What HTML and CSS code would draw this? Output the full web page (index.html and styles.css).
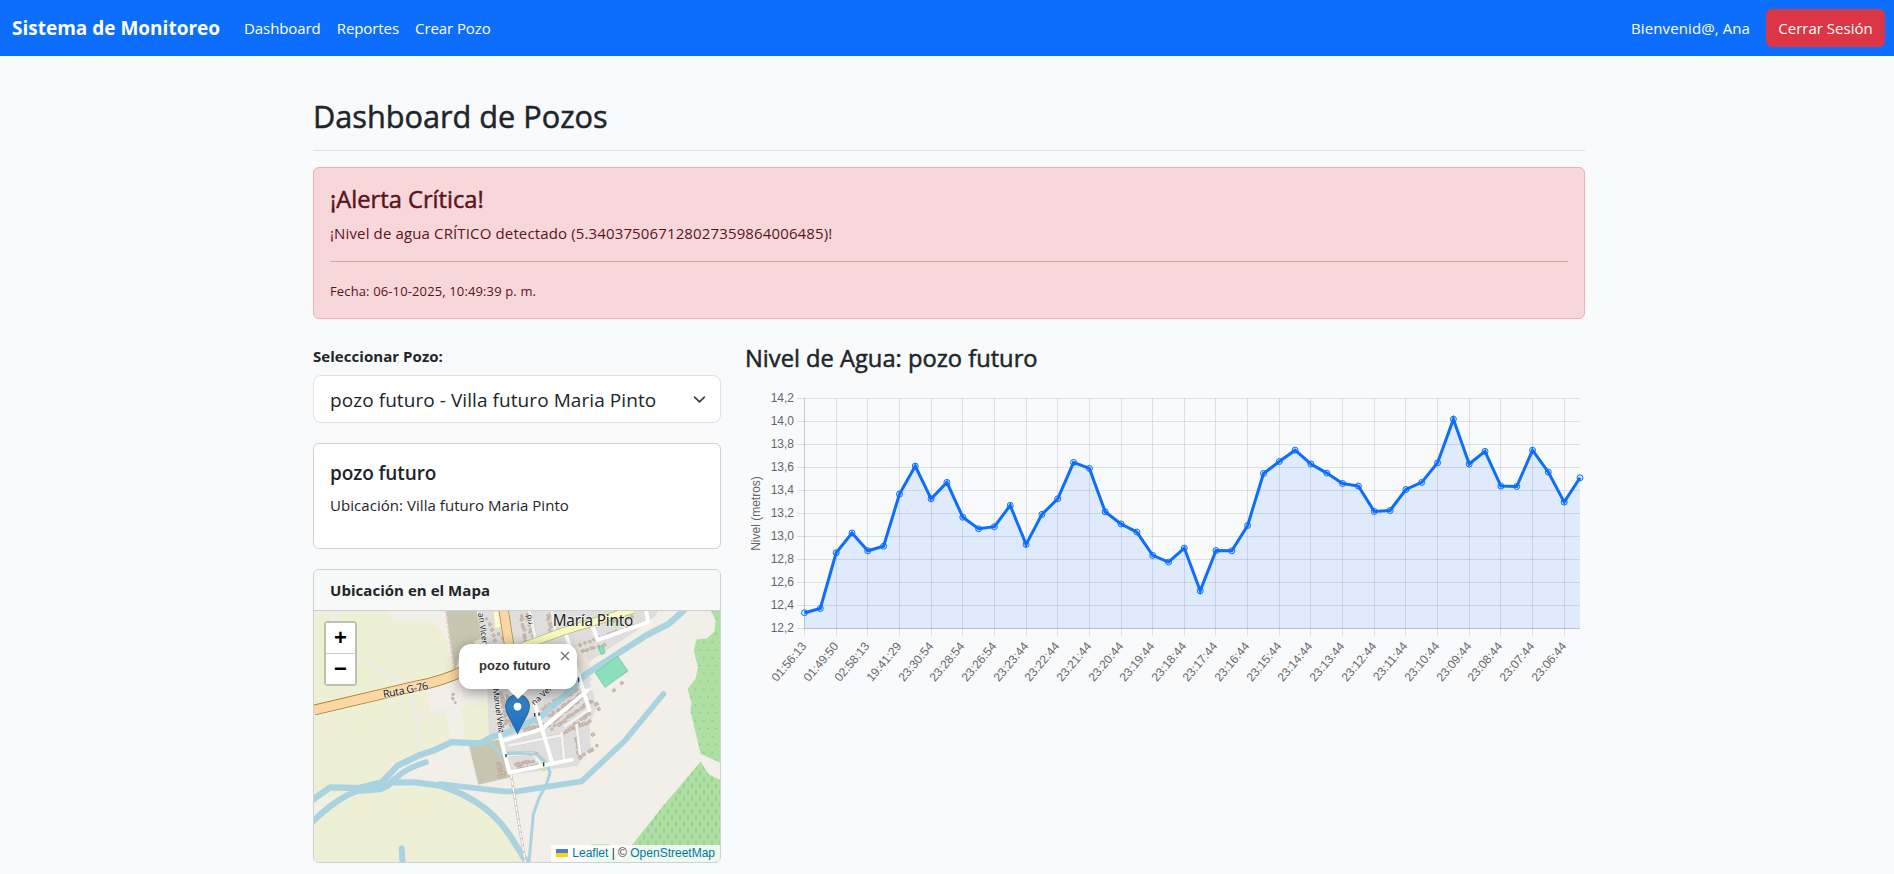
FILE: index.html
```html
<!DOCTYPE html>
<html lang="es">
<head>
<meta charset="utf-8">
<title>Sistema de Monitoreo</title>
<link rel="stylesheet" href="styles.css">
</head>
<body>
<nav class="navbar">
  <a class="brand">Sistema de Monitoreo</a>
  <a class="nav-link">Dashboard</a>
  <a class="nav-link">Reportes</a>
  <a class="nav-link">Crear Pozo</a>
  <span class="welcome">Bienvenid@, Ana</span>
  <button class="btn-logout">Cerrar Sesión</button>
</nav>
<main class="container">
  <h1 class="title">Dashboard de Pozos</h1>
  <section class="alert">
    <h4 class="alert-heading">¡Alerta Crítica!</h4>
    <p class="alert-text">¡Nivel de agua CRÍTICO detectado (5.340375067128027359864006485)!</p>
    <p class="alert-date">Fecha: 06-10-2025, 10:49:39 p. m.</p>
  </section>
  <div class="row">
    <div class="side">
      <label class="label">Seleccionar Pozo:</label>
      <div class="select">
        <span class="select-text">pozo futuro - Villa futuro Maria Pinto</span>
        <svg class="chevron" viewBox="0 0 16 16"><path d="m2 5 6 6 6-6" fill="none" stroke="#343a40" stroke-width="2" stroke-linecap="round" stroke-linejoin="round"/></svg>
      </div>
      <div class="card info">
        <h5 class="card-title">pozo futuro</h5>
        <p class="card-text">Ubicación: Villa futuro Maria Pinto</p>
      </div>
      <div class="card">
        <div class="card-header">Ubicación en el Mapa</div>
        <div class="map">
          <svg class="tiles" viewBox="42 153 1218 750" preserveAspectRatio="none">
            <defs>
              <pattern id="orchard" width="25" height="47" patternUnits="userSpaceOnUse"><path d="M5 10h3v3h-3zM17 33h3v3h-3z" fill="#5f9c57"/></pattern>
              <pattern id="vines" width="24" height="38" patternUnits="userSpaceOnUse"><path d="M6 4v13M18 23v13" stroke="#87bd7d" stroke-width="3"/></pattern>
            </defs>
            <rect x="42" y="153" width="1218" height="750" fill="#f2efe9"/>
            <g fill="#edf0d5">
              <path d="M42 165L95 162L90 187L106 186L108 153H258L290 180L365 178Q415 188 436 230L462 340L42 435Z"/>
              <path d="M42 465L330 398L345 455L360 580L290 603L265 605L272 614L245 665L42 720Z"/>
              <path d="M335 400L380 390L390 455L347 468ZM350 478L435 455L455 540L440 552L365 578ZM480 437L565 417L572 460L580 540L500 552Z"/>
              <path d="M42 785Q130 700 260 685L420 675Q580 720 660 870L672 903H42Z"/>
            </g>
            <path d="M108 153L112 190L172 295Q250 322 292 360L330 385L345 455L365 578M347 468L480 437" fill="none" stroke="#efece8" stroke-width="9"/>
            <path d="M437 153H530L556 255L478 290L464 335ZM507 555L610 535L632 650L535 672Z" fill="#c8c6b0"/>
            <path d="M437 153L462 335" fill="none" stroke="#eccfc9" stroke-width="6" stroke-dasharray="9 6"/>
            <g transform="translate(360 144)">
              <path d="M170 0H720L705 25L640 75L500 165L522 235L528 300L508 345L512 420L470 472L270 498L245 390L207 385L202 260L205 170Z" fill="#dfdedd"/>
              <path d="M745 0L750 45L700 85L480 240L750 600V0Z" fill="#f2efe9"/>
              <path d="M495 175L520 250L528 300L508 345L512 420L470 472L350 300Z" fill="#dfdedd"/>
              <path d="M205 170L160 100L190 90L205 240ZM470 115L490 112L520 200L480 210Z" fill="#eae8dc"/>
              <path d="M220 10H235L243 58L225 62Z" fill="#fbfbd6" stroke="#dfdda8" stroke-width="2"/>
              <path d="M355 470l8-22 14-1 2 38-12 4zM575 30l30 20-20 15z" fill="#c9e7b5"/>
            </g>
            <g id="buildings" fill="#d0c0b5" stroke="#b9a497" stroke-width="2"></g>
            <g fill="none" stroke="#aad3df" stroke-linecap="round" stroke-linejoin="round">
              <path d="M20 730L90 680L175 682L245 665L293 615L360 583L400 570L455 545L540 549L575 530L625 515L720 470L790 410L860 340L1040 225L1105 192L1150 153" stroke-width="19"/>
              <path d="M30 790Q110 710 175 690L240 685Q260 680 275 665L345 665L420 675Q570 720 640 840L690 920" stroke-width="19"/>
              <path d="M378 605Q320 622 290 650L250 682" stroke-width="17"/>
              <path d="M420 670L610 692L650 692L845 662L975 540L1090 401" stroke-width="17"/>
              <path d="M305 863L308 910" stroke-width="18"/>
              <path d="M570 543L597 578L700 576Q735 590 750 635Q745 665 718 710L700 760L687 903" stroke-width="9"/>
            </g>
            <path d="M895 261l14-4 6 21-12 5zM885 337L953 288L984 332L915 381Z" fill="#8ae0bc" stroke="#67bd9b" stroke-width="2"/>
            <path d="M632 638L676 903" stroke="#c8c5c1" stroke-width="8"/>
            <path d="M632 638L676 903" stroke="#fff" stroke-width="4" stroke-dasharray="16 4"/>
            <path d="M42 449L345 378Q430 363 500 327" fill="none" stroke="#a5822f" stroke-width="32"/>
            <path d="M42 449L345 378Q430 363 500 327" fill="none" stroke="#fcd6a4" stroke-width="27"/>
            <g transform="translate(360 144)">
              <path d="M325 -8L345 85M395 0L406 70M440 85L508 305L437 352M470 350L480 435M425 375L432 450M270 410L425 380M265 440L350 435L360 470" fill="none" stroke="#c4c1bd" stroke-width="11" stroke-linejoin="round"/>
              <path d="M325 -8L345 85M395 0L406 70M470 350L480 435M425 375L432 450M270 410L425 380M265 440L340 435L365 470M505 305L437 352M120 235L122 270M490 250L515 240" fill="none" stroke="#f4f3f2" stroke-width="9" stroke-linecap="round" stroke-linejoin="round"/>
              <path d="M210 400L240 437L340 435Q375 450 388 480" fill="none" stroke="#aad3df" stroke-width="7"/>
              <path d="M440 85L508 305M500 248L365 362L255 395M240 380L268 492L455 453M345 290L395 458M520 60L533 95L685 42L678 8" fill="none" stroke="#fff" stroke-width="12" stroke-linecap="round" stroke-linejoin="round"/>
              <path d="M300 118L430 70L640 5" fill="none" stroke="#b9b877" stroke-width="24"/>
              <path d="M300 118L430 70L640 5" fill="none" stroke="#f7fabf" stroke-width="20"/>
              <path d="M250 0L268 115" fill="none" stroke="#a5822f" stroke-width="30"/>
              <path d="M250 0L268 115" fill="none" stroke="#fcd6a4" stroke-width="26"/>
              <path d="M258 436v10M476 208v14M344 314v10M357 312v10M371 462v12" stroke="#333" stroke-width="4"/>
            </g>
            <g transform="translate(630 0)">
              <path d="M603 153L617 180L613 215L590 235L560 238L551 270L564 320L557 355L533 385L545 430L541 450L560 530L572 580L630 606V153ZM572 603L595 640L630 658V903H325L460 735Z" fill="#aedfa3"/>
              <path d="M603 153L617 180L613 215L590 235L560 238L551 270L564 320L557 355L533 385L545 430L541 450L560 530L572 580L630 606V153Z" fill="url(#orchard)"/>
              <path d="M572 603L595 640L630 658V903H325L460 735Z" fill="url(#vines)"/>
              <path d="M245 850H298V856H240ZM215 880H325V903H225Z" fill="#aedfa3"/>
            </g>
            <g class="map-labels">
              <text x="251" y="413" font-size="32" transform="rotate(-11 251 413)" textLength="138">Ruta G-76</text>
              <text x="534" y="160" font-size="25" transform="rotate(82 534 160)">an Vicente</text>
              <text x="578" y="385" font-size="25" transform="rotate(82 578 385)" textLength="134">Manuel Veliz</text>
              <text x="698" y="192" font-size="23" transform="rotate(-100 698 192)">rid</text>
              <text x="703" y="436" font-size="25" transform="rotate(-42 703 436)">na Vel</text>
              <text x="758" y="198" font-size="46" textLength="242">María Pinto</text>
            </g>
          </svg>
          <svg class="marker" viewBox="0 0 25 41">
            <defs><linearGradient id="pin" x1="0" y1="0" x2="0" y2="1"><stop offset="0" stop-color="#3584c4"/><stop offset="1" stop-color="#1a6fc4"/></linearGradient></defs>
            <path d="M12.500 .6C5.800 .6 .6 5.900 .6 12.400c0 2.800 1.200 6 2.300 8.300l9.600 18.700 9.600-18.700c1.100-2.200 2.300-5.500 2.300-8.300C24.400 5.900 19.200.6 12.500.6z" fill="url(#pin)" stroke="#2e6c97" stroke-width="1.100"/>
            <circle cx="12.500" cy="12.600" r="4.400" fill="#fff" stroke="#2e6c97" stroke-width=".8"/>
          </svg>
          <div class="popup"><b>pozo futuro</b><svg class="popup-close" viewBox="0 0 10 10"><path d="M1 1l8 8M9 1L1 9" stroke="#757575" stroke-width="1.400"/></svg></div>
          <div class="zoom"><span class="zoom-btn">+</span><span class="zoom-btn">−</span></div>
          <div class="attribution"><svg class="flag" viewBox="0 0 12 8"><path fill="#4c7be1" d="M0 0h12v4H0z"/><path fill="#ffd500" d="M0 4h12v4H0z"/></svg><a>Leaflet</a> | © <a>OpenStreetMap</a></div>
        </div>
      </div>
    </div>
    <div class="main">
      <h3 class="chart-title">Nivel de Agua: pozo futuro</h3>
      <svg class="chart" id="chart" viewBox="745 388 840 310"></svg>
    </div>
  </div>
</main>
<script src="app.js"></script>
</body>
</html>
```
FILE: styles.css
```css
* { box-sizing: border-box; }
body {
  margin: 0;
  height: 874px;
  overflow: hidden;
  background: #f8fafc;
  color: #212529;
  font-family: "Open Sans", "Noto Sans", sans-serif;
  font-size: 15px;
  line-height: 24px;
}
h1, h3, h4, h5, p { margin: 0; font-weight: 400; }
h1, h3, h4 { -webkit-text-stroke: .5px currentColor; }
.navbar {
  display: flex;
  align-items: center;
  height: 56px;
  padding: 0 9px 0 12px;
  background: #0d6efd;
  color: #fff;
}
.brand { font-size: 19px; font-weight: 700; margin-right: 24px; }
.nav-link { margin-right: 16px; letter-spacing: -.08px; }
.welcome { margin-left: auto; margin-right: 16px; letter-spacing: .1px; }
.btn-logout {
  width: 119px;
  height: 38px;
  padding: 0;
  border: 0;
  border-radius: 6px;
  background: #dc3545;
  color: #fff;
  font: inherit;
}
.container { width: 1272px; margin-left: 313px; padding-top: 40px; }
.title {
  height: 55px;
  padding-top: 1px;
  border-bottom: 1px solid #dee2e6;
  font-size: 30.7px;
  line-height: 38px;
}
.alert {
  height: 152px;
  margin-top: 16px;
  padding: 16px;
  border: 1px solid #f1aeb5;
  border-radius: 6px;
  background: #f8d7da;
  color: #58151c;
}
.alert-heading { font-size: 23.7px; line-height: 30px; margin-bottom: 7px; }
.alert-text { height: 41px; border-bottom: 1px solid #d5a6ab; letter-spacing: .135px; }
.alert-date { margin-top: 17px; font-size: 13px; line-height: 24px; letter-spacing: .13px; }
.row { display: flex; gap: 24px; margin-top: 25px; }
.side { width: 408px; }
.label { display: block; font-weight: 700; margin-bottom: 7px; letter-spacing: .05px; }
.select {
  display: flex;
  align-items: center;
  justify-content: space-between;
  height: 48px;
  padding: 0 14px 0 16px;
  border: 1px solid #dee2e6;
  border-radius: 8px;
  background: #fff;
  font-size: 19px;
  letter-spacing: .07px;
}
.select-text { padding-top: 1px; }
.chevron { width: 13px; height: 13px; }
.card {
  margin-top: 20px;
  border: 1px solid #cfd0d2;
  border-radius: 6px;
  background: #fff;
  overflow: hidden;
}
.info { height: 106px; padding: 17px 16px 16px; }
.card-title { font-size: 19px; font-weight: 600; line-height: 24px; margin-bottom: 8px; letter-spacing: -.1px; }
.card-text { letter-spacing: .05px; }
.card-header {
  height: 41px;
  padding: 8px 16px;
  border-bottom: 1px solid #cfd0d2;
  background: #f7f8f8;
  font-weight: 700;
  letter-spacing: .04px;
}
.map { position: relative; height: 251px; font-family: "Liberation Sans", Arial, sans-serif; }
.tiles { display: block; width: 406px; height: 251px; }
.map-labels text { font-family: "Noto Sans", sans-serif; fill: #222; stroke: #fff; stroke-width: 4px; stroke-opacity: .6; paint-order: stroke; }
.marker { position: absolute; left: 191px; top: 83px; width: 25px; height: 41px; }
.popup {
  position: absolute;
  left: 145px;
  top: 33px;
  width: 118px;
  height: 45px;
  padding: 12px 0 0 20px;
  border-radius: 12px;
  background: #fff;
  box-shadow: 0 3px 14px rgba(0, 0, 0, .4);
  color: #333;
  font-size: 13px;
  line-height: 20px;
}
.popup::after {
  content: "";
  position: absolute;
  left: 48px;
  top: 44px;
  border: 11px solid transparent;
  border-top-color: #fff;
  border-bottom: 0;
}
.popup-close { position: absolute; right: 7px; top: 7px; width: 10px; height: 10px; }
.zoom {
  position: absolute;
  left: 10px;
  top: 10px;
  border: 2px solid rgba(0, 0, 0, .2);
  border-radius: 4px;
  background-clip: padding-box;
}
.zoom-btn {
  display: block;
  width: 29px;
  height: 30px;
  background: #fff;
  color: #000;
  font: bold 22px/30px "Liberation Sans", sans-serif;
  text-align: center;
}
.zoom-btn:first-child { height: 31px; border-bottom: 1px solid #ccc; }
.attribution {
  position: absolute;
  right: 0;
  bottom: 0;
  height: 17px;
  padding: 0 5px;
  background: rgba(255, 255, 255, .8);
  color: #333;
  font-size: 12px;
  line-height: 17px;
  white-space: nowrap;
}
.attribution a { color: #0078a8; }
.flag { width: 12px; height: 8px; margin-right: 4px; }
.main { width: 840px; }
.chart-title { font-size: 23.7px; line-height: 29px; }
.chart { display: block; width: 840px; height: 310px; margin-top: 15px; }
.chart text { font-family: "Liberation Sans", Arial, sans-serif; font-size: 12px; fill: #666; }
```
FILE: app.js
```js
// Water level chart
const levels = [12.337,12.374,12.858,13.03,12.876,12.916,13.369,13.612,13.328,13.47,13.168,13.067,13.085,13.27,12.931,13.192,13.328,13.644,13.592,13.215,13.11,13.038,12.836,12.777,12.899,12.528,12.878,12.876,13.096,13.548,13.652,13.75,13.63,13.551,13.461,13.438,13.218,13.226,13.409,13.47,13.641,14.02,13.63,13.74,13.438,13.435,13.75,13.56,13.299,13.51];
const hours = ["01:56:13","01:49:50","02:58:13","19:41:29","23:30:54","23:28:54","23:26:54","23:23:44","23:22:44","23:21:44","23:20:44","23:19:44","23:18:44","23:17:44","23:16:44","23:15:44","23:14:44","23:13:44","23:12:44","23:11:44","23:10:44","23:09:44","23:08:44","23:07:44","23:06:44"];
const X = i => 804.5 + i * 775.5 / 49;
const Y = v => 628.5 - (v - 12.2) * 115;
let out = '';
for (let i = 0; i <= 10; i++) {
  const y = 628.5 - i * 23;
  out += `<path d="M797 ${y}H1580" stroke="#000" stroke-opacity=".1"/><text x="794" y="${y + 3.5}" text-anchor="end">${(12.2 + i * .2).toFixed(1).replace('.', ',')}</text>`;
}
hours.forEach((h, i) => {
  const x = Math.floor(X(i * 2)) + .5;
  out += `<path d="M${x} 398V636" stroke="#000" stroke-opacity=".1"/><text transform="translate(${x + 2.5} 646.5) rotate(-50)" text-anchor="end">${h}</text>`;
});
out += '<path d="M804.5 398V628.5H1580" fill="none" stroke="#000" stroke-opacity=".1"/>';
out += '<text transform="translate(760 513.500) rotate(-90)" text-anchor="middle">Nivel (metros)</text>';
const pts = levels.map((v, i) => X(i).toFixed(1) + ',' + Y(v).toFixed(1));
out += `<polygon points="804.5,628.5 ${pts.join(' ')} 1580,628.5" fill="#0d6efd" fill-opacity=".1"/>`;
out += `<polyline points="${pts.join(' ')}" fill="none" stroke="#0d6efd" stroke-width="3"/>`;
levels.forEach((v, i) => { out += `<circle cx="${X(i).toFixed(1)}" cy="${Y(v).toFixed(1)}" r="3" fill="#0d6efd" fill-opacity=".1" stroke="#0d6efd"/>`; });
document.getElementById('chart').innerHTML = out;

// Houses along the town streets: [x1, y1, x2, y2, count]
const rows = [
  [555,170,575,240,5],[585,215,610,240,3],[655,165,668,240,8],[672,160,690,235,8],[735,160,745,215,7],[770,215,860,180,6],
  [830,250,930,215,8],[840,270,900,250,6],[930,180,990,165,5],[925,215,1010,190,6],[860,330,890,310,4],
  [595,395,610,490,14],[612,400,622,490,12],[720,440,820,385,12],[740,465,830,400,13],[735,490,850,400,14],[750,500,860,420,14],
  [650,520,700,505,6],[665,500,720,490,6],[700,470,715,500,5],[785,515,860,455,10],[870,420,885,440,3],[820,500,860,480,6],
  [640,605,690,598,7],[645,620,720,610,8],[820,530,830,585,7],[835,590,880,550,5],[585,605,590,640,5],[595,605,600,640,5],[450,400,458,425,3],[868,515,872,520,1],[930,385,960,365,2]
];
let seed = 7;
const rnd = () => (seed = seed * 16807 % 2147483647) / 2147483647;
let houses = '';
rows.forEach(([x1, y1, x2, y2, n]) => {
  for (let i = 0; i < n; i++) {
    const k = n > 1 ? i / (n - 1) : 0;
    const x = x1 + (x2 - x1) * k + rnd() * 6, y = y1 + (y2 - y1) * k + rnd() * 6;
    houses += `<rect x="${x.toFixed(0)}" y="${y.toFixed(0)}" width="${(6 + rnd() * 5).toFixed(0)}" height="${(5 + rnd() * 5).toFixed(0)}" transform="rotate(-30 ${x.toFixed(0)} ${y.toFixed(0)})"/>`;
  }
});
document.getElementById('buildings').innerHTML = houses;
```
